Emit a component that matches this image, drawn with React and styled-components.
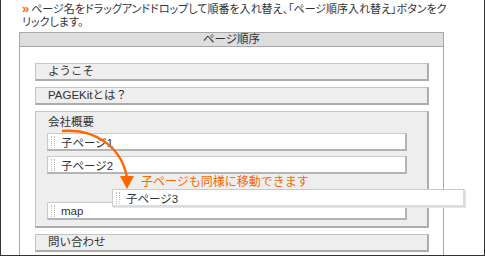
import React from 'react'
import styled, { createGlobalStyle } from 'styled-components'

const GlobalStyle = createGlobalStyle`
body{
  margin: 0;
  overflow: hidden;
  background: #fff;
  font-family: "Liberation Sans", "Noto Sans CJK JP", sans-serif;
}
`

const Frame = styled.div`
position: relative;
width: 485px;
height: 256px;
box-sizing: border-box;
border: 1px solid #333;
border-top: none;
overflow: hidden;
`

const Lead = styled.p`
margin: 0 0 3px 0;
padding: 2px 0 0 21px;
font-size: 11px;
line-height: 13px;
color: #333;
font-feature-settings: "palt";
white-space: nowrap;
`

const Mark = styled.span`
color: #ff6600;
font-weight: bold;
font-size: 13px;
margin-right: 2px;
`

const Panel = styled.div`
margin-left: 18px;
width: 425px;
height: 230px;
box-sizing: border-box;
border: 1px solid #a8a8a8;
border-bottom: none;
`

const PanelHead = styled.div`
height: 13px;
line-height: 13px;
background: #dedede;
border-bottom: 1px solid #a8a8a8;
text-align: center;
font-size: 11.5px;
color: #333;
font-feature-settings: "palt";
`

const PanelBody = styled.div`
padding: 16px 14px 0 15px;
display: flex;
flex-direction: column;
gap: 6px;
`

const Row = styled.div`
box-sizing: border-box;
height: 18px;
background: #eee;
border-top: 1px solid #c4c4c4;
border-left: 1px solid #c4c4c4;
border-right: 2px solid #acacac;
border-bottom: 2px solid #acacac;
padding-left: 12px;
font-size: 11.5px;
line-height: 15px;
color: #333;
`

const Group = styled.div`
box-sizing: border-box;
background: #eee;
border-top: 1px solid #c4c4c4;
border-left: 1px solid #c4c4c4;
border-right: 2px solid #acacac;
border-bottom: 2px solid #acacac;
padding: 3px 0 6px 11px;
display: flex;
flex-direction: column;
gap: 5px;
`

const GroupTitle = styled.div`
padding-left: 1px;
margin-bottom: -2px;
font-size: 11.5px;
line-height: 15px;
color: #333;
`

const Child = styled.div`
box-sizing: border-box;
width: ${p => p.$w || 360}px;
height: 18px;
display: flex;
align-items: center;
background: #fff;
border-top: 1px solid #cacaca;
border-left: 1px solid #cacaca;
border-right: 2px solid ${p => p.$edge || '#b4b4b4'};
border-bottom: 2px solid ${p => p.$edge || '#b4b4b4'};
font-size: 11.5px;
color: #333;
`

const Grip = styled.span`
box-sizing: border-box;
width: 4px;
height: 12px;
margin: 0 6px 0 3px;
border-left: 1px dotted #bbb;
border-right: 1px dotted #bbb;
`

const Slot = styled.div`
height: 18px;
`

const Dragged = styled(Child)`
position: absolute;
left: 111px;
top: 189px;
box-shadow: 1px 1px 0 #e4e4e4;
`

const Note = styled.div`
position: absolute;
left: 140px;
top: 173px;
font-family: "Noto Sans CJK JP", sans-serif;
font-size: 12px;
line-height: 15px;
color: #ff6600;
`

const ArrowSvg = styled.svg`
position: absolute;
left: 50px;
top: 120px;
pointer-events: none;
`

const Arrow = () => (
  <ArrowSvg width="100" height="80" viewBox="50 120 100 80">
    <path d="M61 131 C 95 128, 121 148, 126 178" fill="none" stroke="#ff6600" strokeWidth="2.4" />
    <polygon points="119,176 133,176 126,189" fill="#ff6600" />
  </ArrowSvg>
)

const App = () => {
  return (
    <>
      <GlobalStyle />
      <Frame>
        <Lead>
          <Mark>»</Mark>ページ名をドラッグアンドドロップして順番を入れ替え、「ページ順序入れ替え」ボタンをク<br />リックします。
        </Lead>
        <Panel>
          <PanelHead>ページ順序</PanelHead>
          <PanelBody>
            <Row>ようこそ</Row>
            <Row>PAGEKitとは？</Row>
            <Group>
              <GroupTitle>会社概要</GroupTitle>
              <Child><Grip />子ページ1</Child>
              <Child><Grip />子ページ2</Child>
              <Slot />
              <Child><Grip />map</Child>
            </Group>
            <Row>問い合わせ</Row>
          </PanelBody>
        </Panel>
        <Note>子ページも同様に移動できます</Note>
        <Arrow />
        <Dragged $w={353} $edge="#dcdcdc"><Grip />子ページ3</Dragged>
      </Frame>
    </>
  )
}

export default App
